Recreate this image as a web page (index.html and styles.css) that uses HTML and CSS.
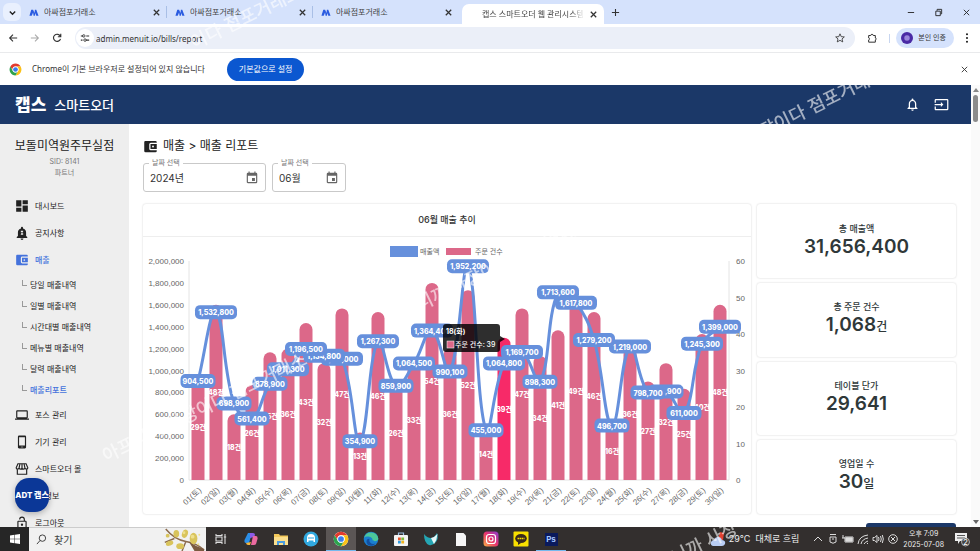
FILE: index.html
```html
<!DOCTYPE html>
<html lang="ko">
<head>
<meta charset="utf-8">
<title>캡스 스마트오더 웹 관리시스템</title>
<link rel="stylesheet" href="styles.css">
</head>
<body>
<svg class="defs" aria-hidden="true">
  <symbol id="i-close" viewBox="0 0 10 10"><path d="M2 2l6 6M8 2l-6 6" fill="none" stroke="currentColor" stroke-width="1.4"/></symbol>
  <symbol id="i-fav" viewBox="0 0 22 14"><path d="M1 14L5 1h4l3 7 1-7h3l5 13h-5l-2-6-1 6h-3L9 7l-3 7z" fill="#2a5be0"/></symbol>
  <symbol id="i-wallet" viewBox="0 0 24 24"><path fill="currentColor" fill-rule="evenodd" d="M22 18v1a2 2 0 0 1-2 2H4a2 2 0 0 1-2-2V5c0-1.100.9-2 2-2h16a2 2 0 0 1 2 2v1h-9.500A2.500 2.500 0 0 0 10 8.500v7a2.500 2.500 0 0 0 2.500 2.500zM12 16V8h10v8zM16 10.500a1.500 1.500 0 1 0 0 3 1.500 1.500 0 0 0 0-3z"/></symbol>
  <symbol id="i-dash" viewBox="0 0 24 24"><path fill="currentColor" d="M2 13h9V2H2zM2 22h9v-7H2zM13 22h9V11h-9zM13 2v7h9V2z"/></symbol>
  <symbol id="i-notice" viewBox="0 0 24 24"><path fill="currentColor" d="M12 24a2.500 2.500 0 0 0 2.500-2.500h-5A2.500 2.500 0 0 0 12 24zm7-7v-6c0-3.300-1.900-6-5.300-6.800V3a1.700 1.700 0 0 0-3.400 0v1.200C6.900 5 5 7.700 5 11v6l-2 2v1.500h18V19z"/><path d="M10 8h4v1.500L12 12v.5h2V15h-4v-1.500l2-2.500v-.5h-2z" fill="#eee"/></symbol>
  <symbol id="i-laptop" viewBox="0 0 24 24"><path fill="currentColor" d="M20 18c1.100 0 2-.9 2-2V6c0-1.100-.9-2-2-2H4c-1.100 0-2 .9-2 2v10c0 1.100.9 2 2 2H0v2h24v-2zM4 6h16v10H4z"/></symbol>
  <symbol id="i-phone" viewBox="0 0 24 24"><path fill="currentColor" fill-rule="evenodd" d="M17 1H7a2 2 0 0 0-2 2v18c0 1.100.9 2 2 2h10a2 2 0 0 0 2-2V3a2 2 0 0 0-2-2zm0 17H7V4h10zM10 20h4v1h-4z"/></symbol>
  <symbol id="i-store" viewBox="0 0 24 24"><path fill="none" stroke="currentColor" stroke-width="2" d="M4 12v9h16v-9M5 3h14l3 7c0 3-4.500 3-5 0 0 3-5 3-5 0 0 3-5 3-5 0-.5 3-5 3-5 0zM8.500 3L7 10M12 3v7M15.500 3L17 10"/></symbol>
  <symbol id="i-lock" viewBox="0 0 24 24"><path fill="currentColor" d="M12 17a2 2 0 1 0 0-4 2 2 0 0 0 0 4zm6-9h-1V6A5 5 0 0 0 7 6h2a3 3 0 0 1 6 0v2H6c-1.100 0-2 .9-2 2v10c0 1.100.9 2 2 2h12c1.100 0 2-.9 2-2V10c0-1.100-.9-2-2-2zm0 12H6V10h12z"/></symbol>
  <symbol id="i-cal" viewBox="0 0 24 24"><path fill="currentColor" d="M17 12h-5v5h5zM16 1v2H8V1H6v2H5a2 2 0 0 0-2 2v14c0 1.100.9 2 2 2h14a2 2 0 0 0 2-2V5a2 2 0 0 0-2-2h-1V1zm3 18H5V8h14z"/></symbol>
  <symbol id="i-bell" viewBox="0 0 24 24"><path fill="currentColor" d="M12 22c1.100 0 2-.9 2-2h-4c0 1.100.9 2 2 2zm6-6v-5c0-3.070-1.630-5.640-4.500-6.320V4a1.500 1.500 0 0 0-3 0v.68C7.640 5.360 6 7.920 6 11v5l-2 2v1h16v-1zm-2 1H8v-6c0-2.480 1.510-4.500 4-4.500s4 2.020 4 4.500z"/></symbol>
  <symbol id="i-exit" viewBox="0 0 24 24"><path fill="currentColor" d="M21 3H3a2 2 0 0 0-2 2v4h2V5h18v14H3v-4H1v4c0 1.100.9 2 2 2h18a2 2 0 0 0 2-2V5a2 2 0 0 0-2-2zM11 16l4-4-4-4v3H1v2h10z"/></symbol>
  <symbol id="i-chrome" viewBox="0 0 24 24"><circle cx="12" cy="12" r="11" fill="#fff"/><path d="M2.500 6.500a11 11 0 0 1 19 0H12a5.500 5.500 0 0 0-4.800 8.200z" fill="#e33b2e"/><path d="M21.500 6.500A11 11 0 0 1 12 23l4.800-8.200A5.500 5.500 0 0 0 12 6.500z" fill="#fbc116"/><path d="M2.500 6.500A11 11 0 0 0 12 23l4.800-8.200a5.500 5.500 0 0 1-9.600 0z" fill="#2da24d"/><circle cx="12" cy="12" r="5.500" fill="#fff"/><circle cx="12" cy="12" r="4.300" fill="#3b7ded"/></symbol>
</svg>

<div class="tabstrip">
  <button class="tab-search" aria-label="탭 검색"><svg viewBox="0 0 10 10"><path d="M2 4l3 3 3-3" fill="none" stroke="currentColor" stroke-width="1.500"/></svg></button>
  <div class="tab"><svg class="fav"><use href="#i-fav"/></svg><span>아싸점포거래소</span><button aria-label="닫기"><svg><use href="#i-close"/></svg></button></div>
  <div class="tab"><svg class="fav"><use href="#i-fav"/></svg><span>아싸점포거래소</span><button aria-label="닫기"><svg><use href="#i-close"/></svg></button></div>
  <div class="tab last"><svg class="fav"><use href="#i-fav"/></svg><span>아싸점포거래소</span><button aria-label="닫기"><svg><use href="#i-close"/></svg></button></div>
  <div class="tab active"><span>캡스 스마트오더 웹 관리시스템</span><button aria-label="닫기"><svg><use href="#i-close"/></svg></button></div>
  <button class="plain new-tab" aria-label="새 탭"><svg viewBox="0 0 10 10"><path d="M5 1v8M1 5h8" stroke="currentColor" stroke-width="1.200"/></svg></button>
  <div class="win">
    <button class="plain" aria-label="최소화"><svg viewBox="0 0 10 10"><path d="M2 5h7" stroke="currentColor"/></svg></button>
    <button class="plain" aria-label="이전 크기로"><svg viewBox="0 0 10 10"><path d="M2 3.500h5v5H2zM3.500 3V1.500h5v5H7.500" fill="none" stroke="currentColor"/></svg></button>
    <button class="plain" aria-label="창 닫기"><svg viewBox="0 0 10 10"><path d="M2 2l6 6M8 2l-6 6" stroke="currentColor"/></svg></button>
  </div>
</div>

<div class="toolbar">
  <button class="plain" aria-label="뒤로"><svg viewBox="0 0 12 12"><path d="M11 6H2M6 2L2 6l4 4" fill="none" stroke="currentColor" stroke-width="1.300"/></svg></button>
  <button class="plain dim" aria-label="앞으로"><svg viewBox="0 0 12 12"><path d="M1 6h9M6 2l4 4-4 4" fill="none" stroke="currentColor" stroke-width="1.300"/></svg></button>
  <button class="plain" aria-label="새로고침"><svg viewBox="0 0 12 12"><path d="M10 4A4.300 4.300 0 1 0 10.200 7M10.500 1v3.500H7" fill="none" stroke="currentColor" stroke-width="1.400"/></svg></button>
  <div class="omnibox">
    <span class="site"><svg viewBox="0 0 12 12"><path d="M1 3.500h3M7 8.500h4M7.500 3.500H11M1 8.500h2" stroke="currentColor" stroke-width="1.300"/><circle cx="4.500" cy="3.500" r="1.500" fill="none" stroke="currentColor"/><circle cx="6" cy="8.500" r="1.500" fill="none" stroke="currentColor"/></svg></span>
    <input type="text" aria-label="주소창" value="admin.menuit.io/bills/report">
    <button class="plain" aria-label="북마크"><svg viewBox="0 0 12 12"><path d="M6 1l1.500 3.400 3.700.3-2.800 2.400.9 3.600L6 8.800l-3.300 1.900.9-3.600L.8 4.700l3.700-.3z" fill="none" stroke="currentColor"/></svg></button>
  </div>
  <button class="plain ext" aria-label="확장 프로그램"><svg viewBox="0 0 12 12"><path d="M2 3h2.500c0-2 3-2 3 0H10v3c1.500.3 1.500 2 0 2.300V11H2V8.300c1.500-.4 1.500-2 0-2.300z" fill="none" stroke="currentColor" stroke-width="1.200"/></svg></button>
  <span class="divider"></span>
  <button class="profile"><i></i>본인 인증</button>
  <button class="plain kebab" aria-label="메뉴"><svg viewBox="0 0 12 12"><circle cx="6" cy="1.500" r="1.100"/><circle cx="6" cy="6" r="1.100"/><circle cx="6" cy="10.500" r="1.100"/></svg></button>
</div>

<div class="infobar">
  <svg class="logo"><use href="#i-chrome"/></svg>
  <span>Chrome이 기본 브라우저로 설정되어 있지 않습니다</span>
  <button class="default-btn">기본값으로 설정</button>
  <button class="plain info-close" aria-label="닫기"><svg viewBox="0 0 10 10"><path d="M2 2l6 6M8 2l-6 6" stroke="currentColor"/></svg></button>
</div>

<div class="viewport">
  <div class="app">
    <header class="appbar">
      <strong>캡스</strong><span>스마트오더</span>
      <button class="plain" aria-label="알림"><svg><use href="#i-bell"/></svg></button>
      <button class="plain" aria-label="나가기"><svg class="wide"><use href="#i-exit"/></svg></button>
    </header>
    <div class="body">
      <aside class="sidebar">
        <h2>보돌미역원주무실점</h2>
        <p>SID: 8141<br>파트너</p>
        <nav>
          <a href="#"><svg><use href="#i-dash"/></svg>대시보드</a>
          <a href="#"><svg><use href="#i-notice"/></svg>공지사항</a>
          <a href="#" class="on"><svg><use href="#i-wallet"/></svg>매출</a>
          <div class="sub">
            <a href="#">당일 매출내역</a>
            <a href="#">일별 매출내역</a>
            <a href="#">시간대별 매출내역</a>
            <a href="#">메뉴별 매출내역</a>
            <a href="#">달력 매출내역</a>
            <a href="#" class="on">매출리포트</a>
          </div>
          <a href="#"><svg><use href="#i-laptop"/></svg>포스 관리</a>
          <a href="#"><svg><use href="#i-phone"/></svg>기기 관리</a>
          <a href="#"><svg><use href="#i-store"/></svg>스마트오더 몰</a>
          <a href="#"><svg></svg>내 정보</a>
          <a href="#"><svg><use href="#i-lock"/></svg>로그아웃</a>
        </nav>
        <button class="fab">ADT 캡스</button>
      </aside>
      <main class="content">
        <h1><svg><use href="#i-wallet"/></svg>매출 &gt; 매출 리포트</h1>
        <div class="filters">
          <div class="field year"><label for="y">날짜 선택</label><input id="y" type="text" value="2024년"><svg><use href="#i-cal"/></svg></div>
          <div class="field month"><label for="m">날짜 선택</label><input id="m" type="text" value="06월"><svg><use href="#i-cal"/></svg></div>
        </div>
        <div class="report">
          <section class="card chart">
            <h3>06월 매출 추이</h3>
            <svg id="chart" viewBox="0 0 608 277" role="img" aria-label="06월 매출 추이"></svg>
          </section>
          <div class="stats">
            <section class="card stat"><h4>총 매출액</h4><b>31,656,400</b></section>
            <section class="card stat"><h4>총 주문 건수</h4><b>1,068<small>건</small></b></section>
            <section class="card stat"><h4>테이블 단가</h4><b>29,641</b></section>
            <section class="card stat"><h4>영업일 수</h4><b>30<small>일</small></b></section>
          </div>
        </div>
        <button class="action" aria-label="다운로드"></button>
      </main>
    </div>
  </div>
  <div class="scroll"><span class="up"></span><span class="thumb"></span><span class="down"></span></div>
</div>

<footer class="taskbar">
  <button class="start" aria-label="시작"><svg viewBox="0 0 12 12"><path fill="#fff" d="M0 1.700l5.400-.8v4.800H0zM6 .8l6-.8v5.700H6zM0 6.300h5.400v4.800L0 10.300zM6 6.300h6V12l-6-.8z"/></svg></button>
  <label class="search"><svg viewBox="0 0 12 12"><circle cx="7" cy="4.500" r="3.500" fill="none" stroke="#333"/><path d="M4.500 7L1 11" stroke="#333"/></svg><input type="text" placeholder="찾기" aria-label="찾기">
    <svg class="flowers" viewBox="0 0 46 24"><path d="M5 1Q14 12 26 14T45 23M14 11L4 15M26 14L22 24" fill="none" stroke="#8b6a4c" stroke-width="1.500"/><path d="M29 14Q36 19 45 22V24H35z" fill="#7a5940"/><g fill="#d9c45c"><ellipse cx="16" cy="6" rx="3" ry="4"/><ellipse cx="25" cy="6" rx="3" ry="4.500" transform="rotate(20 25 6)"/><ellipse cx="34" cy="11" rx="4" ry="6"/><ellipse cx="20" cy="19" rx="4" ry="3"/><ellipse cx="9" cy="16" rx="4" ry="2.500" transform="rotate(-20 9 16)"/><circle cx="7" cy="8" r="2"/></g><g fill="#eee08e"><circle cx="33" cy="9" r="2"/><circle cx="24" cy="5" r="1.500"/><circle cx="40" cy="7" r="1"/><circle cx="39" cy="17" r="1"/></g></svg>
  </label>
  <div class="apps">
    <button aria-label="작업 보기"><svg viewBox="0 0 16 16"><path d="M3 3v1.500h6V3M3 13v-1.500h6V13M3 6h6v4H3zM12 3v10M10.800 6h2.400" fill="none" stroke="#ddd" stroke-width="1.100"/></svg></button>
    <button aria-label="Copilot"><svg viewBox="0 0 16 16"><path d="M5 2h4L6 12H3Q1 12 1.500 9z" fill="#2b8fe8"/><path d="M7 2h3q2 0 2 2l-1 2-4 1z" fill="#8c5be8"/><path d="M10 5h3q2 0 1.500 3L13 13q-.5 1-2 1H8z" fill="#ec6aa0"/><path d="M3 12l5-1-1 3H5q-1.500 0-2-2z" fill="#f4b43c"/></svg></button>
    <button aria-label="파일 탐색기"><svg viewBox="0 0 16 16"><path d="M1 3h5l1 1.500h8V14H1z" fill="#f4c95b"/><path d="M1 6h14v8H1z" fill="#fbdf8d"/><path d="M4 10h8v4h-2v-2H6v2H4z" fill="#4a9ce0"/></svg></button>
    <button aria-label="POS"><svg viewBox="0 0 16 16"><circle cx="8" cy="8" r="7.500" fill="#31a9e0"/><path d="M4 11V7a4 4 0 0 1 8 0v4h-1.500V9.500h-5V11z" fill="#fff"/><path d="M5 7h6" stroke="#31a9e0"/></svg></button>
    <button class="on" aria-label="Chrome"><svg><use href="#i-chrome"/></svg></button>
    <button aria-label="Edge"><svg viewBox="0 0 16 16"><circle cx="8" cy="8" r="7.300" fill="#1b7fd0"/><path d="M1 7a7.300 7.300 0 0 1 14.300.5c0 3-4.800 3.500-5.800 1.500C10 6 3.500 4 1 7z" fill="#4cc79a"/><path d="M6.500 8c-1 3 2 6 6 4.500C9 17 3 14.500 3.500 10 4 8 5.500 7.500 6.500 8z" fill="#1450a0"/></svg></button>
    <button aria-label="Store"><svg viewBox="0 0 16 16"><path d="M5.500 4V2h5v2" fill="none" stroke="#9bd" stroke-width="1.200"/><rect x="1" y="4" width="14" height="11" rx="1" fill="#f4f4f4"/><path d="M5 6.500h2.800v2.800H5z" fill="#e5532c"/><path d="M8.300 6.500h2.800v2.800H8.300z" fill="#7fb83a"/><path d="M5 9.800h2.800v2.700H5z" fill="#2d9be0"/><path d="M8.300 9.800h2.800v2.700H8.300z" fill="#f2b21e"/></svg></button>
    <button aria-label="메신저"><svg viewBox="0 0 16 16"><path d="M1 3q3 4 7 4 3 0 6-5 2 5-1 9t-7 3Q1 12 1 3z" fill="#25a6b4"/><path d="M8 7q4-1 6.500-4-.5 6-3.500 10z" fill="#e8f7f7"/></svg></button>
    <button aria-label="문서"><svg viewBox="0 0 16 16"><path d="M3 2h7.500L13 4.500V15H3z" fill="#f6f6f6"/></svg></button>
    <button aria-label="Instagram"><svg viewBox="0 0 16 16"><defs><linearGradient id="ig" x1="0" y1="1" x2="1" y2="0"><stop offset="0" stop-color="#fdb345"/><stop offset=".5" stop-color="#e8336d"/><stop offset="1" stop-color="#8a3bd0"/></linearGradient></defs><rect x=".5" y=".5" width="15" height="15" rx="3.500" fill="url(#ig)"/><rect x="3.500" y="3.500" width="9" height="9" rx="2.500" fill="none" stroke="#fff" stroke-width="1.200"/><circle cx="8" cy="8" r="2" fill="none" stroke="#fff" stroke-width="1.200"/></svg></button>
    <button aria-label="KakaoTalk"><svg viewBox="0 0 16 16"><rect x=".5" y=".5" width="15" height="15" rx="1" fill="#f9e000"/><ellipse cx="8" cy="7.500" rx="5.800" ry="4.500" fill="#3a2a1c"/><path d="M5 10v4l3-2z" fill="#3a2a1c"/><path d="M4.500 7.500h7" stroke="#f9e000" stroke-width="1.500" stroke-dasharray="1.500 .5"/></svg></button>
    <button class="run ps">Ps</button>
  </div>
  <div class="tray">
    <svg class="weather" viewBox="0 0 16 16"><path d="M10 1l4 1-1 7H8z" fill="#e2402f"/><path d="M3 15q-3-1-2-4 1-2 3-2 1-3 4-3t4 3q4 .5 3 4-1 2-3 2z" fill="#b9cdf4"/></svg>
    <span class="temp">29°C&nbsp; 대체로 흐림</span>
    <svg viewBox="0 0 12 12"><path d="M2 8l4-4 4 4"/></svg>
    <svg viewBox="0 0 12 12"><path d="M3 1.500h6M3 4h6v5q-3 2.500-6 0zM5 6h2"/></svg>
    <svg viewBox="0 0 12 12"><path d="M3 4h8v5H3zM1 2v3M0 5h3M4 5h6v3H4z" /><path d="M4 5h6v3H4z" fill="#ddd"/></svg>
    <svg viewBox="0 0 12 12"><path d="M1 11q1-8 10-9M4 11q1-5 7-6M7 11q1-2 4-3M10 10.500h1"/></svg>
    <svg viewBox="0 0 12 12"><path d="M1 4.500h1.500L5 2.500v7L2.500 7.500H1zM6.500 4q1 2 0 4M8.500 3q1.500 3 0 6M10.300 2q2 4 0 8"/></svg>
    <svg viewBox="0 0 12 12"><circle cx="6" cy="6" r="4.300"/><path d="M4 4l4 4M8 4l-4 4"/></svg>
    <time>오후 7:09<br>2025-07-08</time>
    <svg class="note" viewBox="0 0 16 16"><path d="M1 2h12v8H6l-2 3v-3H1z" fill="#eee" stroke="none"/><path d="M3 4.500h8M3 7h8" stroke="#555"/><circle cx="11.500" cy="11" r="4" fill="#444" stroke="#ddd" stroke-width=".7"/><text x="11.500" y="14">2</text></svg>
  </div>
</footer>

<div class="marks" aria-hidden="true">
  <span class="m1">아프니까 사장이다 점포거래소</span>
  <span class="m2">아프니까 사장이다 점포거래소</span>
  <span class="m3">아프니까 사장이다 점포거래소</span>
  <span class="m4">이다 점포거래소</span>
  <span class="m5">아프니까 사장</span>
</div>
<script src="chart.js"></script>
</body>
</html>
```
FILE: styles.css
```css
* { box-sizing: border-box; }
html, body { height: 100%; }
body {
  margin: 0;
  display: flex;
  flex-direction: column;
  overflow: hidden;
  position: relative;
  background: #fff;
  color: #333;
  font: 8px/12px Inter, "Noto Sans CJK KR", sans-serif;
}
button, input { font: inherit; color: inherit; border: 0; padding: 0; margin: 0; background: none; min-width: 0; }
a { color: inherit; text-decoration: none; }
h1, h2, h3, h4, p { margin: 0; }
svg { display: block; flex: none; }
.defs { position: absolute; width: 0; height: 0; }
.plain { display: grid; place-items: center; flex: none; width: 22px; }
.plain svg { width: 11px; height: 11px; }

/* browser chrome */
.tabstrip { flex: none; height: 24px; display: flex; align-items: center; background: #d5e2fc; padding-left: 3px; font-family: "Noto Sans", "Noto Sans CJK KR", sans-serif; }
.tab-search { width: 18px; height: 18px; border-radius: 6px; background: #e9f0fe; display: grid; place-items: center; color: #222; }
.tab-search svg { width: 9px; height: 9px; }
.tab { width: 146px; height: 12px; display: flex; align-items: center; gap: 5px; padding: 0 4px 0 8px; border-right: 1px solid #a9bfe6; }
.tab.last { border-color: transparent; }
.tab span { flex: 1; overflow: hidden; white-space: nowrap; color: #444; }
.tab button { width: 10px; }
.tab button svg { width: 9px; height: 9px; color: #333; }
.fav { width: 10px; height: 7px; }
.tab.active { width: 142px; height: 20px; margin-left: 3px; align-self: flex-end; background: #fff; border: 0; border-radius: 7px 7px 0 0; padding: 0 5px 0 20px; }
.tab.active span { -webkit-mask-image: linear-gradient(90deg, #000 88%, transparent); mask-image: linear-gradient(90deg, #000 88%, transparent); }
.new-tab svg { width: 9px; height: 9px; }
.win { margin-left: auto; display: flex; }
.win .plain { width: 28px; }
.win svg { width: 9px; height: 9px; color: #222; }

.toolbar { flex: none; height: 29px; display: flex; align-items: center; border-bottom: 1px solid #e9eaec; padding: 0 3px 0 2px; color: #333; }
.dim { color: #aaa; }
.toolbar .plain svg { width: 10px; height: 10px; }
.omnibox { flex: 1; height: 22px; margin-left: 7px; display: flex; align-items: center; border-radius: 11px; background: #ebeff8; padding: 0 4px 0 1px; }
.site { width: 18px; height: 18px; border-radius: 50%; background: #fff; display: grid; place-items: center; }
.site svg { width: 10px; height: 10px; }
.omnibox input { flex: 1; margin-left: 2px; height: 20px; font-family: "Noto Sans", sans-serif; }
.ext { margin-left: 6px; }
.divider { width: 1px; height: 9px; margin: 0 6px; background: #c8d6f0; }
.profile { height: 20px; margin-right: 3px; padding: 0 8px 0 5px; border-radius: 10px; background: #d5e2fc; display: flex; align-items: center; gap: 5px; font-size: 7px; white-space: nowrap; }
.profile i { width: 12px; height: 12px; border-radius: 50%; background: radial-gradient(#9a86dc 25%, #4a2aa5 40%); }
.kebab { width: 20px; }

.infobar { flex: none; height: 32px; display: flex; align-items: center; padding: 0 5px 0 9px; font-family: "Noto Sans", "Noto Sans CJK KR", sans-serif; }
.logo { width: 13px; height: 13px; margin-right: 10px; }
.default-btn { height: 23px; margin-left: 22px; padding: 0 12px; border-radius: 12px; background: #0b57d0; color: #fff; }
.info-close { margin-left: auto; }
.info-close svg { width: 9px; height: 9px; }

/* application */
.viewport { flex: 1; min-height: 0; display: flex; overflow: hidden; }
.app { flex: 1; min-width: 0; display: flex; flex-direction: column; }
.appbar { flex: none; height: 39px; background: #1b3868; color: #fff; display: flex; align-items: center; padding: 0 19px 0 15px; font-size: 13px; font-weight: 500; }
.appbar strong { font-size: 17px; font-weight: 900; margin-right: 8px; }
.appbar span { margin-right: auto; }
.appbar .plain { width: 22px; margin-left: 7px; }
.appbar svg { width: 15px; height: 15px; }
.body { flex: 1; min-height: 0; display: flex; }
.sidebar { width: 129px; flex: none; background: #eee; position: relative; padding-top: 14px; overflow: hidden; }
.sidebar h2 { font-size: 12px; line-height: 16px; font-weight: 400; text-align: center; white-space: nowrap; color: #222; }
.sidebar p { font-size: 7px; line-height: 11px; text-align: center; color: #777; margin-top: 2px; }
nav { margin-top: 14px; color: #222; }
nav > a { display: flex; align-items: center; height: 27px; gap: 6px; padding-left: 15px; white-space: nowrap; }
nav svg { width: 14px; height: 14px; }
.sub { padding: 1px 0 1px 22px; }
.sub a { display: flex; align-items: center; height: 21px; white-space: nowrap; }
.sub a::before { content: ""; width: 4px; height: 5px; margin: 0 3px 4px 0; border: solid #999; border-width: 0 0 1px 1px; }
nav .on { color: #4472dc; font-weight: 500; }
.fab { position: absolute; left: 15px; bottom: 15px; width: 34px; height: 34px; border-radius: 14px; background: #0b3797; color: #fff; font-size: 8px; font-weight: 800; white-space: nowrap; box-shadow: 0 2px 6px #0004; }

.content { flex: 1; min-width: 0; padding: 14px 15px 0 14px; overflow: hidden; }
.content h1 { display: flex; align-items: center; gap: 5px; font-size: 12px; line-height: 16px; font-weight: 400; color: #222; }
.content h1 svg { width: 15px; height: 15px; }
.filters { display: flex; gap: 6px; margin-top: 9px; }
.field { position: relative; height: 29px; border: 1px solid #c9c9c9; border-radius: 3px; display: flex; align-items: center; padding: 0 6px; }
.year { width: 123px; }
.month { width: 74px; }
.field label { position: absolute; left: 5px; top: -7px; padding: 0 3px; background: #fff; color: #777; font-size: 7px; }
.field input { flex: 1; width: 0; font-size: 10px; line-height: 16px; color: #333; }
.field svg { width: 14px; height: 14px; color: #666; }
.report { display: grid; grid-template-columns: minmax(0, 1fr) 199px; gap: 6px; margin-top: 12px; }
.card { background: #fff; border-radius: 3px; box-shadow: 0 0 2px #0003; }
.chart h3 { height: 33px; line-height: 32px; border-bottom: 1px solid #eee; text-align: center; font-size: 9px; font-weight: 500; }
#chart { width: 100%; }
.stats { display: grid; grid-auto-rows: 1fr; gap: 5px; }
.stat { display: flex; flex-direction: column; align-items: center; justify-content: center; padding-bottom: 2px; color: #2f3839; }
.stat h4 { font-size: 9px; line-height: 13px; font-weight: 500; }
.stat b { font-size: 19px; line-height: 23px; font-weight: 600; }
.stat small { font-size: 12px; font-weight: 500; }
.action { display: block; width: 90px; height: 24px; margin: 9px 0 0 auto; border-radius: 3px; background: #1b3868; }

.scroll { width: 9px; flex: none; background: #fafafa; display: flex; flex-direction: column; align-items: center; padding: 3px 0; gap: 3px; }
.thumb { width: 5px; height: 27px; border-radius: 3px; background: #8c8c8c; }
.up, .down { border: 3px solid transparent; }
.up { border-top: 0; border-bottom: 4px solid #888; }
.down { border-bottom: 0; border-top: 4px solid #666; margin-top: auto; }

/* chart marks */
.axis { fill: #666; font: 8px "Liberation Sans", "Noto Sans CJK KR", sans-serif; }
.frame { stroke: #e4e4e4; fill: none; }
.bar { fill: #dc6889; }
.bar.hot { fill: #f72a68; }
.line { fill: none; stroke: #6690dc; stroke-width: 3; }
.pill { fill: #6690dc; }
.value, .count { fill: #fff; font: 800 7px Inter, "Noto Sans CJK KR", sans-serif; text-anchor: middle; }
.end { text-anchor: end; }
.legend { fill: #666; font: 7px "Noto Sans CJK KR", sans-serif; }
.tip { fill: #000; fill-opacity: .82; }
.tip-title, .tip-text { fill: #fff; font: 700 7px Inter, "Noto Sans CJK KR", sans-serif; }
.tip-text { font-weight: 500; }

/* desktop taskbar */
.taskbar { flex: none; height: 24px; display: flex; align-items: center; background: #332f2e; color: #eee; }
.start { width: 29px; height: 24px; display: grid; place-items: center; background: #262626; }
.start svg { width: 10px; height: 10px; }
.search { width: 177px; height: 24px; background: #f1f1f1; border-top: 1px solid #ccc; display: flex; align-items: center; padding-left: 7px; gap: 7px; }
.search > svg:first-child { width: 11px; height: 11px; }
.search input { flex: 1; font-size: 10px; line-height: 16px; }
.search input::placeholder { color: #444; opacity: 1; }
.search .flowers { width: 46px; height: 23px; }
.apps { display: flex; }
.apps button { width: 30px; height: 24px; display: grid; place-items: center; }
.apps svg { width: 16px; height: 16px; }
.apps .on { background: #5b5655; box-shadow: inset 0 -1px #76b9ed; }
.apps .run { box-shadow: inset 0 -1px #76b9ed; }
.apps .ps { color: #a5c6ff; font-size: 8px; font-weight: 700; }
.ps { background: linear-gradient(#0a1a5c, #0a1a5c) center / 13px 13px no-repeat; }
.tray { margin-left: auto; display: flex; align-items: center; gap: 3px; padding-right: 10px; white-space: nowrap; }
.tray svg { width: 12px; height: 12px; fill: none; stroke: #ddd; }
.tray .weather { width: 16px; height: 16px; stroke: none; }
.temp { font-size: 9px; margin-right: 10px; }
.tray time { font-size: 7px; line-height: 11px; text-align: center; margin: 0 7px 0 1px; }
.tray .note { width: 16px; height: 16px; }
.note text { fill: #fff; stroke: none; font-size: 8px; text-anchor: middle; }

/* diagonal watermark laid over everything */
.marks { position: absolute; inset: 0; overflow: hidden; pointer-events: none; }
.marks span { position: absolute; transform-origin: 0 100%; transform: rotate(-26deg); font-size: 18px; line-height: 20px; font-weight: 500; color: #fff; opacity: .6; white-space: nowrap; }
.m1 { left: 11%; top: 81%; }
.m2 { left: 40%; top: 56%; }
.m3 { left: 70%; top: 29%; }
.m4 { left: 20%; top: 6%; }
.m5 { left: 66%; top: 102%; }
```
FILE: chart.js
```js
const orders = [29, 48, 18, 26, 35, 36, 43, 32, 47, 13, 46, 26, 33, 54, 36, 52, 14, 39, 47, 34, 41, 49, 46, 16, 36, 27, 32, 25, 40, 48];
const sales = [904500, 1532800, 698900, 561400, 878900, 1011300, 1196500, 1134800, 1107000, 354900, 1267300, 859900, 1064500, 1364400, 990100, 1952200, 455000, 1064800, 1169700, 898300, 1713600, 1617800, 1279200, 496700, 1219000, 798700, 808900, 611000, 1245300, 1399000];
const week = "토일월화수목금";
const hot = 17;
const left = 46, right = 586, top_ = 24, bottom = 243;
const step = (right - left) / orders.length;
const svg = document.getElementById("chart");

function add(tag, attrs, text) {
  const el = document.createElementNS("http://www.w3.org/2000/svg", tag);
  for (const k in attrs) el.setAttribute(k, attrs[k]);
  if (text !== undefined) el.textContent = text;
  svg.appendChild(el);
  return el;
}
const cx = i => left + step * (i + 0.5);
const yOrder = v => bottom - (bottom - top_) * v / 60;
const ySale = v => bottom - (bottom - top_) * v / 2000000;

// axes
add("path", { class: "frame", d: `M${left} ${top_}V${bottom}H${right}V${top_}` });
for (let v = 0; v <= 2000000; v += 200000)
  add("text", { class: "axis end", x: 41, y: ySale(v) + 3 }, v.toLocaleString("en-US"));
for (let v = 0; v <= 60; v += 10)
  add("text", { class: "axis", x: 593, y: yOrder(v) + 3 }, v);
orders.forEach((_, i) => {
  const x = cx(i) + 4, y = 254;
  add("text", { class: "axis end", x, y, transform: `rotate(-42 ${x} ${y})` }, `${String(i + 1).padStart(2, "0")}(${week[i % 7]})`);
});

// legend
add("rect", { class: "pill", x: 247, y: 9, width: 28, height: 11 });
add("text", { class: "legend", x: 277, y: 17 }, "매출액");
add("rect", { class: "bar", x: 303, y: 11, width: 25, height: 7 });
add("text", { class: "legend", x: 332, y: 17 }, "주문 건수");

// order bars
orders.forEach((v, i) => {
  const x = cx(i) - 6.5, y = yOrder(v);
  add("path", { class: i === hot ? "bar hot" : "bar", d: `M${x} ${bottom}V${y + 6.5}a6.5 6.5 0 0 1 13 0V${bottom}z` });
});
orders.forEach((v, i) => add("text", { class: "count", x: cx(i), y: (yOrder(v) + bottom) / 2 + 3 }, v + "건"));

// sales curve
const pts = sales.map((v, i) => [cx(i), ySale(v)]);
const ctl = pts.map((p, i) => {
  const a = pts[Math.max(i - 1, 0)], b = pts[Math.min(i + 1, pts.length - 1)];
  const d1 = Math.hypot(p[0] - a[0], p[1] - a[1]), d2 = Math.hypot(b[0] - p[0], b[1] - p[1]);
  const f1 = 0.4 * d1 / (d1 + d2), f2 = 0.4 * d2 / (d1 + d2);
  const dx = b[0] - a[0], dy = b[1] - a[1];
  return { in: [p[0] - f1 * dx, p[1] - f1 * dy], out: [p[0] + f2 * dx, p[1] + f2 * dy] };
});
let d = `M${pts[0]}`;
for (let i = 1; i < pts.length; i++) d += `C${ctl[i - 1].out} ${ctl[i].in} ${pts[i]}`;
add("path", { class: "line", d });

// value pills, earlier days on top
for (let i = sales.length - 1; i >= 0; i--) {
  const w = sales[i] >= 1000000 ? 42 : 35;
  add("rect", { class: "pill", x: pts[i][0] - w / 2, y: pts[i][1] - 7, width: w, height: 14, rx: 5 });
  add("text", { class: "value", x: pts[i][0], y: pts[i][1] + 3 }, sales[i].toLocaleString("en-US"));
}

// tooltip for the hovered bar
add("path", { class: "tip", d: "M303 87h51q3 0 3 3v9l5 3-5 3v7q0 3-3 3h-51q-3 0-3-3V90q0-3 3-3z" });
add("text", { class: "tip-title", x: 303, y: 97 }, "18(화)");
add("rect", { class: "bar", x: 304, y: 104, width: 7, height: 7, stroke: "#fff", "stroke-width": "0.5" });
add("text", { class: "tip-text", x: 312, y: 110 }, "주문 건수: " + orders[hot]);
```
